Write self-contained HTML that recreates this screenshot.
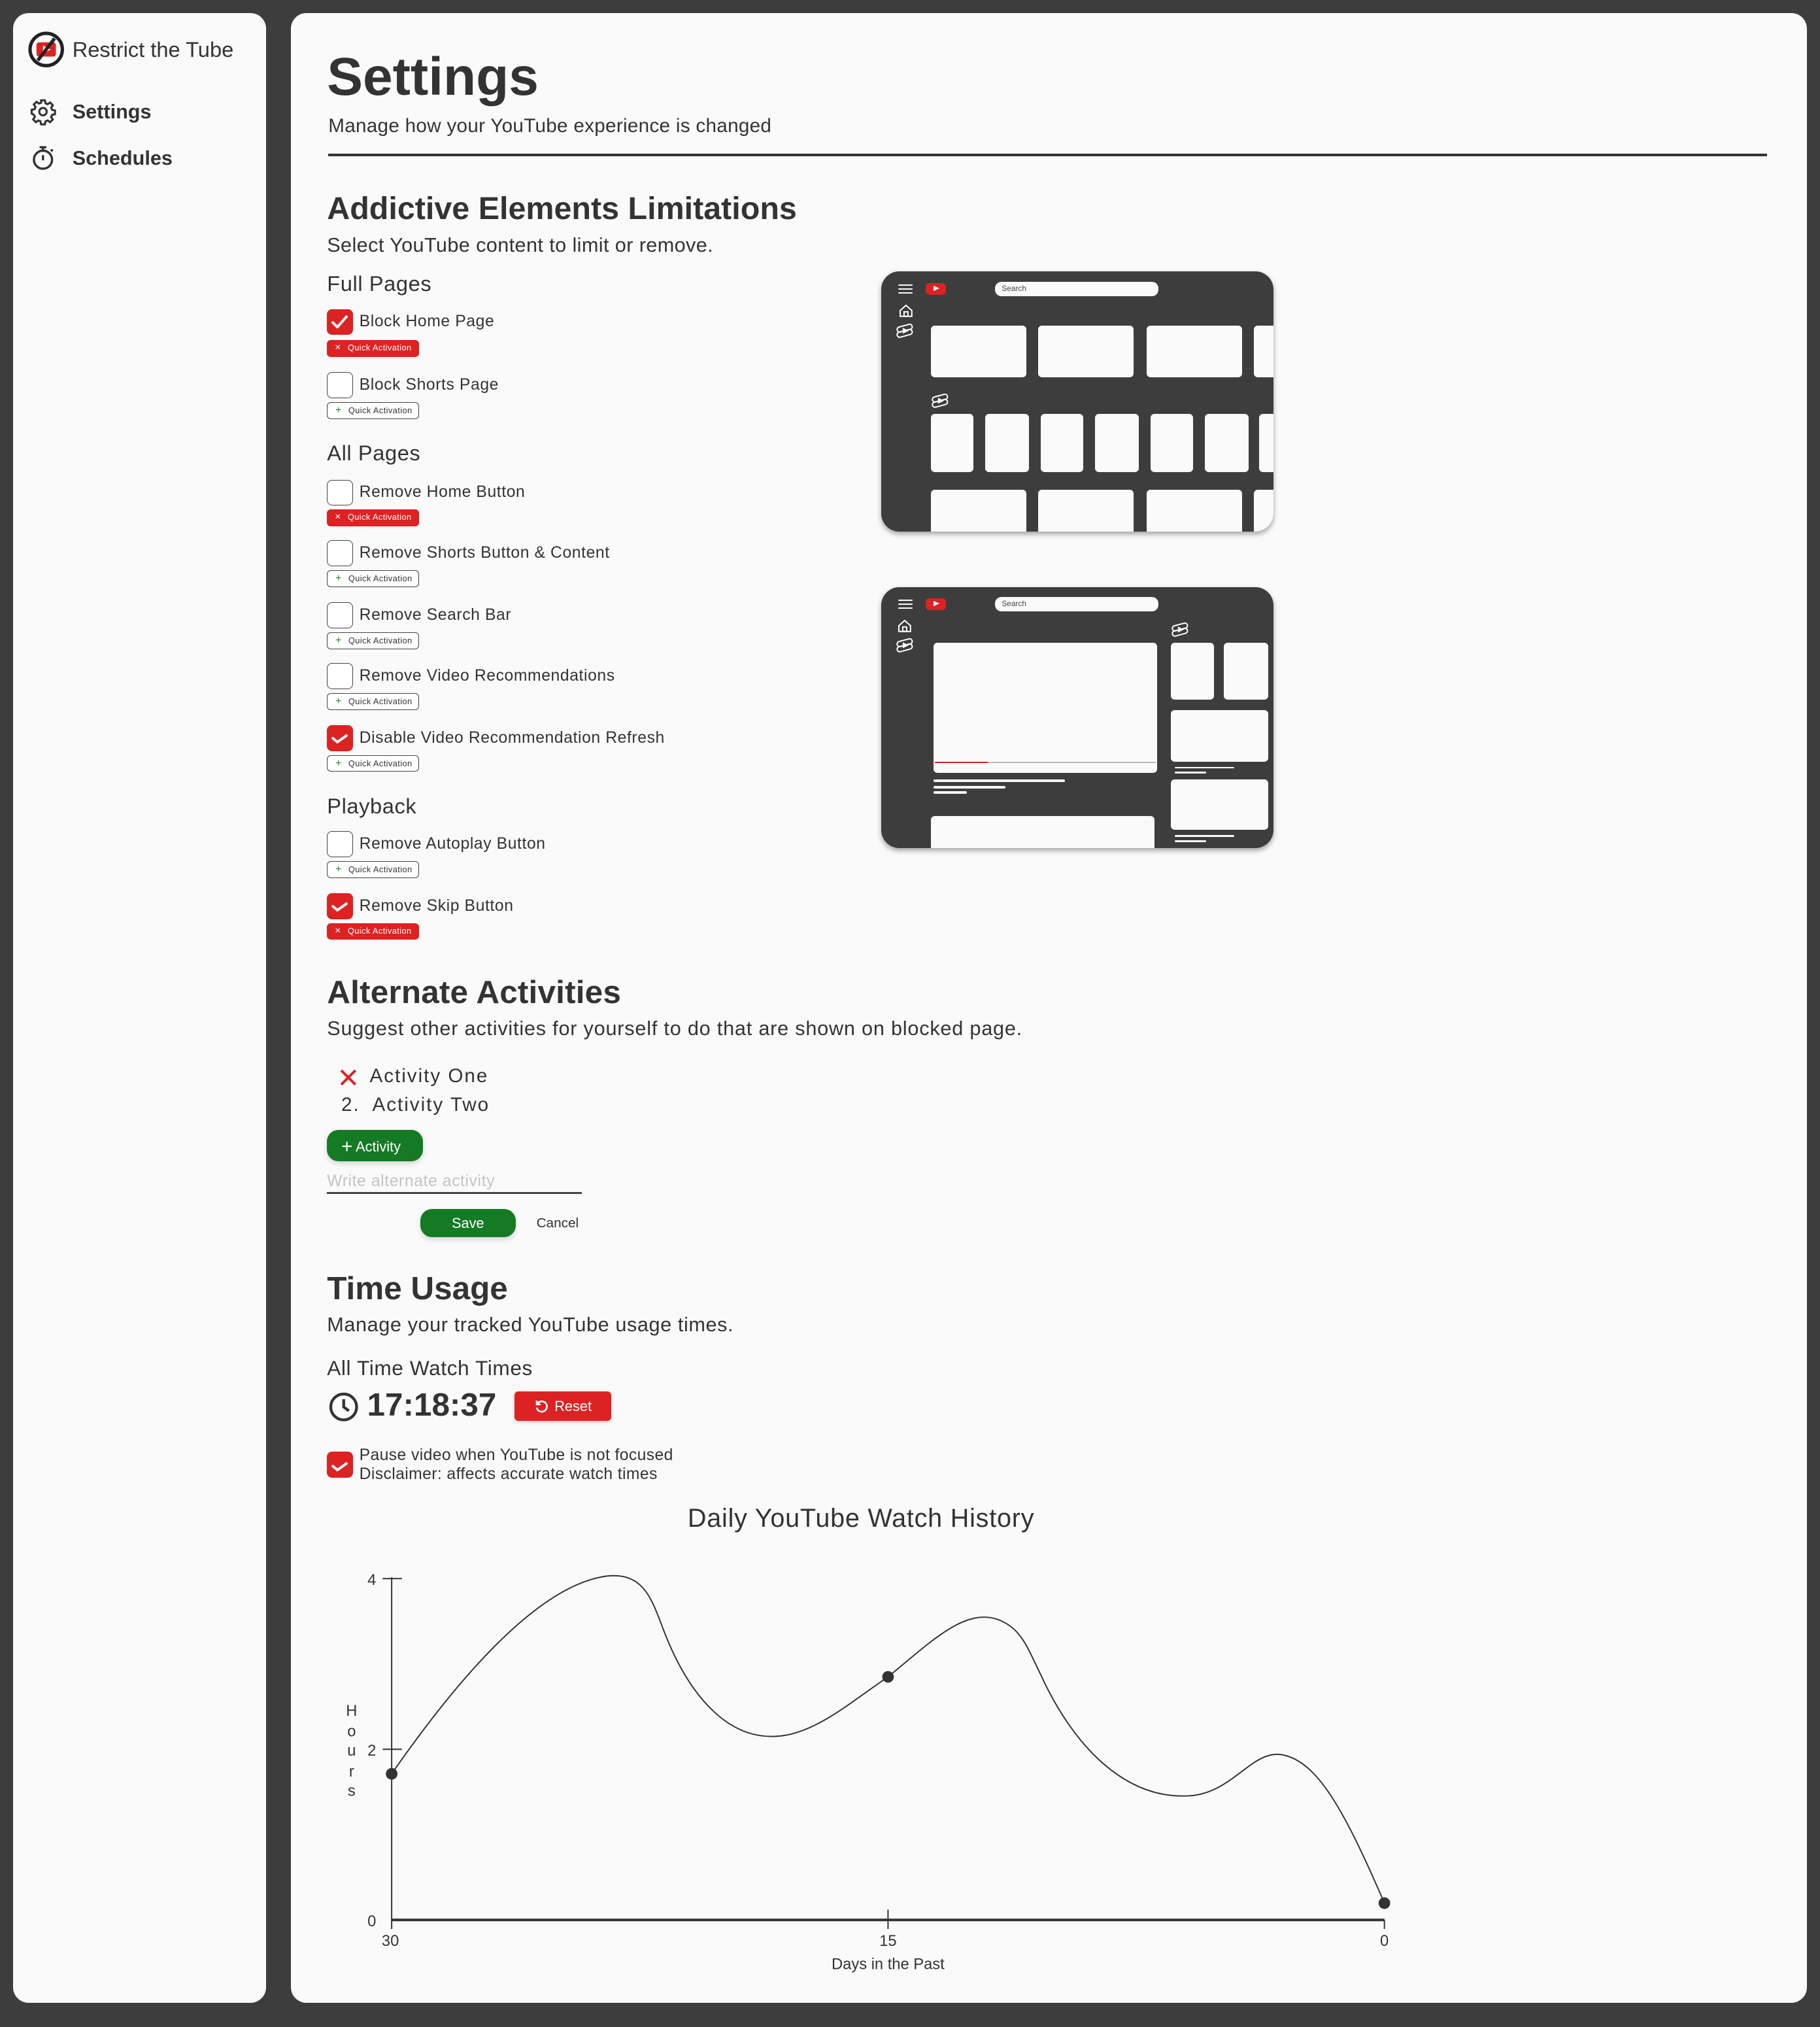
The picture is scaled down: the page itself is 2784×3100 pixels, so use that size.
<!DOCTYPE html>
<html><head><meta charset="utf-8">
<style>
html{zoom:1.97727;}
*{box-sizing:border-box;margin:0;padding:0}
body{width:1408px;height:1568px;background:#3d3d3d;position:relative;overflow:hidden;font-family:"Liberation Sans",sans-serif;color:#333;}
.a{position:absolute;white-space:nowrap}
.panel{position:absolute;background:#fafafa;border-radius:12px}
.cb{position:absolute;width:20px;height:20px;border:1px solid #444;border-radius:4px;background:#fff}
.cb.on{background:#dc2222;border-color:#dc2222}
.lbl{position:absolute;font-size:12.5px;color:#333;letter-spacing:.3px;line-height:14px}
.pill{position:absolute;width:71px;height:13px;border-radius:3px;font-size:6.5px;line-height:12px;padding-left:16px;letter-spacing:.2px}
.pill.r{background:#dc2222;color:#fff}
.pill.w{border:1px solid #444;color:#333;background:#fff}
.pill b{position:absolute;left:6px;top:0;font-weight:normal;font-size:8px}
.pill.w b{color:#1a8a2a}
.h3{position:absolute;font-size:16.5px;color:#333;letter-spacing:.3px}
.card{position:absolute;background:#3d3d3d;border-radius:14px;overflow:hidden;box-shadow:0 2px 4px rgba(0,0,0,.35)}
.bx{position:absolute;background:#fafafa;border-radius:3px}
.ln{position:absolute;background:#fafafa;height:2px;border-radius:1px}
</style></head><body>
<div class="panel" style="left:10px;top:10px;width:196px;height:1539px"></div>
<div class="panel" style="left:225px;top:10px;width:1173px;height:1539px"></div>

<!-- logo -->
<svg class="a" style="left:21px;top:24px" width="29" height="29" viewBox="0 0 29 29">
<rect x="7" y="9" width="15" height="11" rx="2" fill="#dc2222"/>
<path d="M12 11.5 L18 14.5 L12 17.5Z" fill="#fff"/>
<circle cx="14.5" cy="14.5" r="12.5" fill="none" stroke="#222" stroke-width="2.6"/>
<path d="M21 6 L8 23" stroke="#222" stroke-width="2.6"/>
</svg>
<div class="a" style="left:56px;top:29px;font-size:16.5px;color:#333">Restrict the Tube</div>
<svg class="a" style="left:23px;top:76px" width="21" height="21" viewBox="0 0 24 24" fill="none" stroke="#333" stroke-width="1.8">
<path d="M10.3 2h3.4l.5 2.6 1.9.8 2.2-1.5 2.4 2.4-1.5 2.2.8 1.9 2.6.5v3.4l-2.6.5-.8 1.9 1.5 2.2-2.4 2.4-2.2-1.5-1.9.8-.5 2.6h-3.4l-.5-2.6-1.9-.8-2.2 1.5-2.4-2.4 1.5-2.2-.8-1.9L2 13.7v-3.4l2.6-.5.8-1.9-1.5-2.2 2.4-2.4 2.2 1.5 1.9-.8z"/><circle cx="12" cy="12" r="3.3"/></svg>
<div class="a" style="left:56px;top:78px;font-size:15.5px;font-weight:bold;color:#333">Settings</div>
<svg class="a" style="left:23px;top:111px" width="21" height="22" viewBox="0 0 24 24" fill="none" stroke="#333" stroke-width="2">
<circle cx="12" cy="14" r="8"/><path d="M9 3h6M12 3v3M12 10v4.5M19 6.5l1.5-1.5"/></svg>
<div class="a" style="left:56px;top:114px;font-size:15.5px;font-weight:bold;color:#333">Schedules</div>

<!-- header -->
<div class="a" style="left:253px;top:36px;font-size:41.5px;font-weight:bold;color:#333">Settings</div>
<div class="a" style="left:254px;top:89px;font-size:15px;color:#333;letter-spacing:.15px">Manage how your YouTube experience is changed</div>
<div class="a" style="left:254px;top:119px;width:1113px;height:2px;background:#333"></div>

<div class="a" style="left:253px;top:147px;font-size:24.5px;font-weight:bold;color:#333">Addictive Elements Limitations</div>
<div class="a" style="left:253px;top:181px;font-size:15.5px;color:#333;letter-spacing:.2px">Select YouTube content to limit or remove.</div>

<div class="h3" style="left:253px;top:210px">Full Pages</div>
<div class="cb on" style="left:253px;top:239px"></div><div class="lbl" style="left:278px;top:242px">Block Home Page</div>
<div class="pill r" style="left:253px;top:263px"><b>×</b>Quick Activation</div>
<div class="cb" style="left:253px;top:288px"></div><div class="lbl" style="left:278px;top:291px">Block Shorts Page</div>
<div class="pill w" style="left:253px;top:311px"><b>+</b>Quick Activation</div>

<div class="h3" style="left:253px;top:341px">All Pages</div>
<div class="cb" style="left:253px;top:371px"></div><div class="lbl" style="left:278px;top:374px">Remove Home Button</div>
<div class="pill r" style="left:253px;top:394px"><b>×</b>Quick Activation</div>
<div class="cb" style="left:253px;top:418px"></div><div class="lbl" style="left:278px;top:421px">Remove Shorts Button &amp; Content</div>
<div class="pill w" style="left:253px;top:441px"><b>+</b>Quick Activation</div>
<div class="cb" style="left:253px;top:466px"></div><div class="lbl" style="left:278px;top:469px">Remove Search Bar</div>
<div class="pill w" style="left:253px;top:489px"><b>+</b>Quick Activation</div>
<div class="cb" style="left:253px;top:513px"></div><div class="lbl" style="left:278px;top:516px">Remove Video Recommendations</div>
<div class="pill w" style="left:253px;top:536px"><b>+</b>Quick Activation</div>
<div class="cb on" style="left:253px;top:561px"></div><div class="lbl" style="left:278px;top:564px">Disable Video Recommendation Refresh</div>
<div class="pill w" style="left:253px;top:584px"><b>+</b>Quick Activation</div>

<div class="h3" style="left:253px;top:614px">Playback</div>
<div class="cb" style="left:253px;top:643px"></div><div class="lbl" style="left:278px;top:646px">Remove Autoplay Button</div>
<div class="pill w" style="left:253px;top:666px"><b>+</b>Quick Activation</div>
<div class="cb on" style="left:253px;top:691px"></div><div class="lbl" style="left:278px;top:694px">Remove Skip Button</div>
<div class="pill r" style="left:253px;top:714px"><b>×</b>Quick Activation</div>

<!-- mockup 1 -->
<div class="card" style="left:682px;top:210px;width:303px;height:201px">
 <div class="ln" style="left:13px;top:10px;width:11px;height:1px"></div><div class="ln" style="left:13px;top:13px;width:11px;height:1px"></div><div class="ln" style="left:13px;top:16px;width:11px;height:1px"></div>
 <div class="a" style="left:34px;top:9px;width:16px;height:9px;background:#dc2222;border-radius:3px"></div>
 <div class="a" style="left:40px;top:11px;width:0;height:0;border-left:5px solid #fff;border-top:2.5px solid transparent;border-bottom:2.5px solid transparent"></div>
 <div class="a" style="left:88px;top:8px;width:126px;height:11px;background:#fafafa;border-radius:5px;font-size:6px;line-height:11px;padding-left:5px;color:#444">Search</div>
 <svg class="a" style="left:13px;top:24px" width="12" height="12" viewBox="0 0 12 12" fill="none" stroke="#fff" stroke-width="1"><path d="M1.5 6L6 2l4.5 4v4.5h-9z"/><rect x="4.5" y="7" width="3" height="3.5"/></svg>
 <svg class="a" style="left:11px;top:40px" width="14" height="12" viewBox="0 0 14 12" fill="none" stroke="#fff" stroke-width="1"><rect x="1" y="2" width="12" height="4" rx="2" transform="rotate(-15 7 4)"/><rect x="1" y="6" width="12" height="4" rx="2" transform="rotate(-15 7 8)"/><path d="M6 4.5l3 1.5-3 1.5z" fill="#fff"/></svg>
 <div class="bx" style="left:38px;top:42px;width:74px;height:40px"></div>
 <div class="bx" style="left:121px;top:42px;width:74px;height:40px"></div>
 <div class="bx" style="left:205px;top:42px;width:74px;height:40px"></div>
 <div class="bx" style="left:288px;top:42px;width:20px;height:40px"></div>
 <svg class="a" style="left:38px;top:94px" width="14" height="12" viewBox="0 0 14 12" fill="none" stroke="#fff" stroke-width="1"><rect x="1" y="2" width="12" height="4" rx="2" transform="rotate(-15 7 4)"/><rect x="1" y="6" width="12" height="4" rx="2" transform="rotate(-15 7 8)"/><path d="M6 4.5l3 1.5-3 1.5z" fill="#fff"/></svg>
 <div class="bx" style="left:38px;top:110px;width:33px;height:45px"></div>
 <div class="bx" style="left:80px;top:110px;width:34px;height:45px"></div>
 <div class="bx" style="left:123px;top:110px;width:33px;height:45px"></div>
 <div class="bx" style="left:165px;top:110px;width:34px;height:45px"></div>
 <div class="bx" style="left:208px;top:110px;width:33px;height:45px"></div>
 <div class="bx" style="left:250px;top:110px;width:34px;height:45px"></div>
 <div class="bx" style="left:292px;top:110px;width:20px;height:45px"></div>
 <div class="bx" style="left:38px;top:169px;width:74px;height:40px"></div>
 <div class="bx" style="left:121px;top:169px;width:74px;height:40px"></div>
 <div class="bx" style="left:205px;top:169px;width:74px;height:40px"></div>
 <div class="bx" style="left:288px;top:169px;width:20px;height:40px"></div>
</div>

<!-- mockup 2 -->
<div class="card" style="left:682px;top:454px;width:303px;height:202px">
 <div class="ln" style="left:13px;top:10px;width:11px;height:1px"></div><div class="ln" style="left:13px;top:13px;width:11px;height:1px"></div><div class="ln" style="left:13px;top:16px;width:11px;height:1px"></div>
 <div class="a" style="left:34px;top:9px;width:16px;height:9px;background:#dc2222;border-radius:3px"></div>
 <div class="a" style="left:40px;top:11px;width:0;height:0;border-left:5px solid #fff;border-top:2.5px solid transparent;border-bottom:2.5px solid transparent"></div>
 <div class="a" style="left:88px;top:8px;width:126px;height:11px;background:#fafafa;border-radius:5px;font-size:6px;line-height:11px;padding-left:5px;color:#444">Search</div>
 <svg class="a" style="left:12px;top:24px" width="12" height="12" viewBox="0 0 12 12" fill="none" stroke="#fff" stroke-width="1"><path d="M1.5 6L6 2l4.5 4v4.5h-9z"/><rect x="4.5" y="7" width="3" height="3.5"/></svg>
 <svg class="a" style="left:11px;top:39px" width="14" height="12" viewBox="0 0 14 12" fill="none" stroke="#fff" stroke-width="1"><rect x="1" y="2" width="12" height="4" rx="2" transform="rotate(-15 7 4)"/><rect x="1" y="6" width="12" height="4" rx="2" transform="rotate(-15 7 8)"/><path d="M6 4.5l3 1.5-3 1.5z" fill="#fff"/></svg>
 <div class="bx" style="left:40px;top:43px;width:173px;height:101px"></div>
 <div class="a" style="left:41px;top:135px;width:41px;height:1px;background:#dc2222"></div>
 <div class="a" style="left:82px;top:135px;width:130px;height:1px;background:#bbb"></div>
 <div class="ln" style="left:40px;top:149px;width:102px"></div>
 <div class="ln" style="left:40px;top:154px;width:56px"></div>
 <div class="ln" style="left:40px;top:158px;width:26px"></div>
 <div class="bx" style="left:38px;top:177px;width:173px;height:30px"></div>
 <svg class="a" style="left:224px;top:27px" width="14" height="12" viewBox="0 0 14 12" fill="none" stroke="#fff" stroke-width="1"><rect x="1" y="2" width="12" height="4" rx="2" transform="rotate(-15 7 4)"/><rect x="1" y="6" width="12" height="4" rx="2" transform="rotate(-15 7 8)"/><path d="M6 4.5l3 1.5-3 1.5z" fill="#fff"/></svg>
 <div class="bx" style="left:224px;top:43px;width:33px;height:44px"></div>
 <div class="bx" style="left:265px;top:43px;width:34px;height:44px"></div>
 <div class="bx" style="left:224px;top:95px;width:75px;height:40px"></div>
 <div class="ln" style="left:227px;top:139px;width:46px;height:1.5px"></div>
 <div class="ln" style="left:227px;top:143px;width:24px;height:1.5px"></div>
 <div class="bx" style="left:224px;top:149px;width:75px;height:39px"></div>
 <div class="ln" style="left:227px;top:192px;width:46px;height:1.5px"></div>
 <div class="ln" style="left:227px;top:196px;width:24px;height:1.5px"></div>
</div>

<!-- Alternate Activities -->
<div class="a" style="left:253px;top:753px;font-size:25px;font-weight:bold;color:#333;letter-spacing:.1px">Alternate Activities</div>
<div class="a" style="left:253px;top:787px;font-size:15.5px;color:#333;letter-spacing:.4px">Suggest other activities for yourself to do that are shown on blocked page.</div>
<svg class="a" style="left:263px;top:827px" width="13" height="13" viewBox="0 0 13 13"><path d="M1 1l11 11M12 1L1 12" stroke="#dc2222" stroke-width="2"/></svg>
<div class="a" style="left:286px;top:824px;font-size:15px;color:#333;letter-spacing:1px">Activity One</div>
<div class="a" style="left:264px;top:846px;font-size:15px;color:#333;letter-spacing:1px">2.&nbsp; Activity Two</div>
<div class="a" style="left:253px;top:874px;width:74px;height:24px;background:#157a24;border-radius:9px;color:#fff;font-size:11px;line-height:24px;padding-left:11px;box-shadow:0 2px 4px rgba(0,0,0,.15)"><span style="font-size:15px;position:relative;top:1px">+</span> Activity</div>
<div class="a" style="left:253px;top:907px;font-size:12.5px;color:#c4c4c4;letter-spacing:.3px">Write alternate activity</div>
<div class="a" style="left:253px;top:922px;width:197px;height:1.5px;background:#444"></div>
<div class="a" style="left:325px;top:935px;width:74px;height:22px;background:#157a24;border-radius:9px;color:#fff;font-size:11px;line-height:22px;text-align:center;box-shadow:0 2px 4px rgba(0,0,0,.15)">Save</div>
<div class="a" style="left:415px;top:940px;font-size:10.5px;color:#333">Cancel</div>

<!-- Time usage -->
<div class="a" style="left:253px;top:982px;font-size:25px;font-weight:bold;color:#333">Time Usage</div>
<div class="a" style="left:253px;top:1016px;font-size:15.5px;color:#333;letter-spacing:.3px">Manage your tracked YouTube usage times.</div>
<div class="a" style="left:253px;top:1049px;font-size:16px;color:#333;letter-spacing:.3px">All Time Watch Times</div>
<svg class="a" style="left:254px;top:1076px" width="24" height="24" viewBox="0 0 24 24" fill="none" stroke="#333" stroke-width="2.2"><circle cx="12" cy="12" r="10"/><path d="M12 6v6l4 3"/></svg>
<div class="a" style="left:284px;top:1072px;font-size:25px;font-weight:bold;color:#333">17:18:37</div>
<div class="a" style="left:398px;top:1076px;width:75px;height:23px;background:#dc2222;border-radius:3px;color:#fff;font-size:11px;line-height:23px;padding-left:31px;box-shadow:0 1px 3px rgba(0,0,0,.2)">Reset</div>
<svg class="a" style="left:413px;top:1082px" width="12" height="12" viewBox="0 0 12 12" fill="none" stroke="#fff" stroke-width="1.3"><path d="M2.5 4A4 4 0 1 1 2 7"/><path d="M2 1.5v3h3"/></svg>
<div class="cb on" style="left:253px;top:1123px"></div>
<div class="a" style="left:278px;top:1118px;font-size:12.5px;color:#333;line-height:15px;letter-spacing:.2px">Pause video when YouTube is not focused<br>Disclaimer: affects accurate watch times</div>

<!-- chart -->
<div class="a" style="left:532px;top:1163px;font-size:20px;color:#333;letter-spacing:.4px">Daily YouTube Watch History</div>
<svg class="a" style="left:0;top:0" width="1408" height="1568" font-family="Liberation Sans, sans-serif" fill="#333">
<line x1="303" y1="1220" x2="303" y2="1492" stroke="#333" stroke-width="1"/>
<line x1="303" y1="1485" x2="1071" y2="1485" stroke="#333" stroke-width="2"/>
<line x1="296" y1="1221" x2="311" y2="1221" stroke="#333"/>
<line x1="296" y1="1353" x2="311" y2="1353" stroke="#333"/>
<line x1="687" y1="1477" x2="687" y2="1492" stroke="#333"/>
<line x1="1071" y1="1485" x2="1071" y2="1492" stroke="#333"/>
<text x="291" y="1226" font-size="12" text-anchor="end">4</text>
<text x="291" y="1358" font-size="12" text-anchor="end">2</text>
<text x="291" y="1490" font-size="12" text-anchor="end">0</text>
<text x="302" y="1505" font-size="12" text-anchor="middle">30</text>
<text x="687" y="1505" font-size="12" text-anchor="middle">15</text>
<text x="1071" y="1505" font-size="12" text-anchor="middle">0</text>
<text x="687" y="1523" font-size="12" text-anchor="middle">Days in the Past</text>
<g font-size="12" text-anchor="middle"><text x="272" y="1327">H</text><text x="272" y="1343">o</text><text x="272" y="1358">u</text><text x="272" y="1374">r</text><text x="272" y="1389">s</text></g>
<path d="M303 1372 C360 1290 420 1225 470 1219 C500 1216 505 1240 515 1265 C535 1315 565 1345 600 1343 C630 1342 660 1315 687 1297 C720 1270 745 1245 770 1252 C790 1258 795 1275 805 1295 C830 1350 870 1392 920 1389 C955 1387 970 1350 995 1358 C1020 1365 1040 1400 1071 1472" fill="none" stroke="#333" stroke-width="1"/>
<circle cx="303" cy="1372" r="4.5"/><circle cx="687" cy="1297" r="4.5"/><circle cx="1071" cy="1472" r="4.5"/>
</svg>

<!-- checkmarks (on top) -->
<svg class="a" style="left:0;top:0" width="1408" height="1568">
<g fill="none" stroke="#fff" stroke-width="2" stroke-linecap="round" stroke-linejoin="round">
<path d="M257.5 249.5l3.5 3.5 7-8"/>
<path d="M257.5 571l3.5 3 7-5"/>
<path d="M257.5 701l3.5 3 7-5"/>
<path d="M257.5 1134l3.5 3 7-5"/>
</g></svg>
</body></html>
